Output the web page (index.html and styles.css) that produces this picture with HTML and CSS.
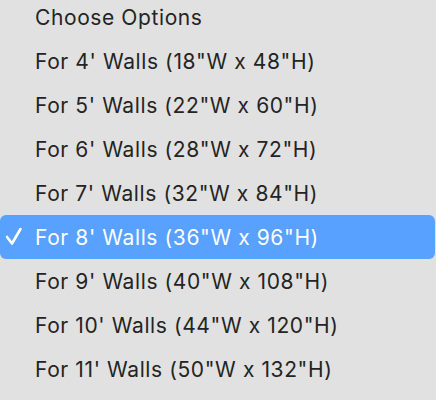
FILE: index.html
```html
<!DOCTYPE html>
<html>
<head>
<meta charset="utf-8">
<link rel="stylesheet" href="styles.css">
</head>
<body>
<ul class="menu">
  <li class="item"><span class="check"></span><span class="label">Choose Options</span></li>
  <li class="item"><span class="check"></span><span class="label">For 4' Walls (18"W x 48"H)</span></li>
  <li class="item"><span class="check"></span><span class="label">For 5' Walls (22"W x 60"H)</span></li>
  <li class="item"><span class="check"></span><span class="label">For 6' Walls (28"W x 72"H)</span></li>
  <li class="item"><span class="check"></span><span class="label">For 7' Walls (32"W x 84"H)</span></li>
  <li class="item selected"><span class="check"><svg width="18" height="20" viewBox="0 0 18 20"><path d="M2 11 L7 17.5 L15.5 3" fill="none" stroke="#fff" stroke-width="2.6" stroke-linecap="round" stroke-linejoin="round"/></svg></span><span class="label">For 8' Walls (36"W x 96"H)</span></li>
  <li class="item"><span class="check"></span><span class="label">For 9' Walls (40"W x 108"H)</span></li>
  <li class="item"><span class="check"></span><span class="label">For 10' Walls (44"W x 120"H)</span></li>
  <li class="item"><span class="check"></span><span class="label">For 11' Walls (50"W x 132"H)</span></li>
</ul>
</body>
</html>
```
FILE: styles.css
```css
html, body {
  margin: 0;
  padding: 0;
  background: #e1e1e1;
  height: 100%;
  overflow: hidden;
}
.menu {
  list-style: none;
  margin: -5px 0 0 0;
  padding: 0;
  width: 436px;
  font-family: Inter, "Noto Sans", sans-serif;
  font-size: 21px;
  letter-spacing: 0.6px;
  color: #242424;
}
.item {
  height: 44px;
  display: flex;
  align-items: center;
  margin-right: 1px;
  border-radius: 6px;
}
.check {
  width: 35px;
  display: flex;
  justify-content: flex-start;
  padding-left: 5px;
  padding-bottom: 2px;
  box-sizing: border-box;
}
.label {
  white-space: nowrap;
}
.selected {
  background: #58a1ff;
  color: #fff;
}
```
